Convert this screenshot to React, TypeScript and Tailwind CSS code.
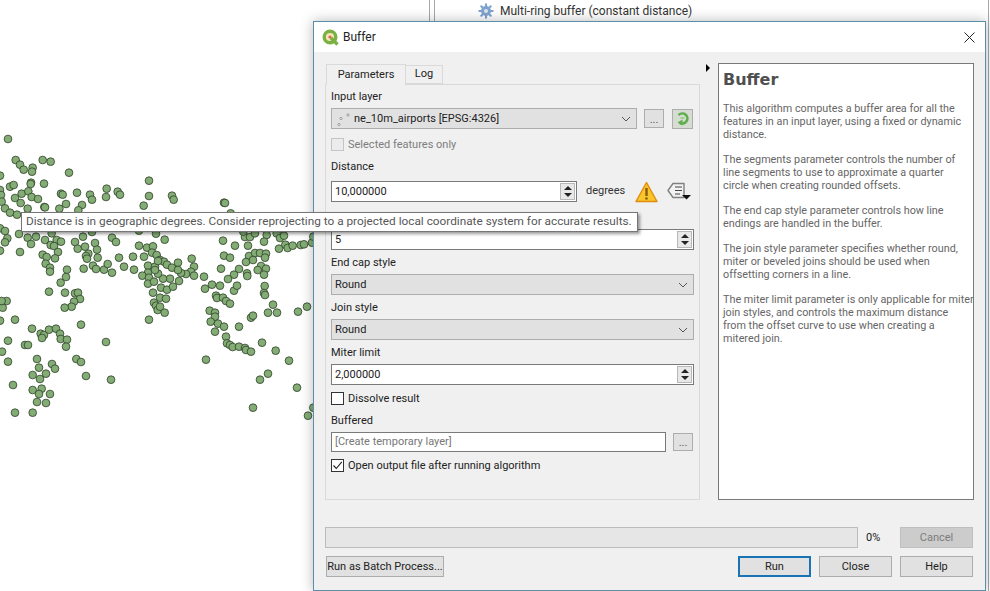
import React from 'react'

const DOTS: [number, number][] = [
  [24,57],[47,120],[60,134],[71,149],[98,143],[96,155],[128,120],[152,125],[207,158],[93,188],[92,192],[132,191],[30,200],[41,195],[0,167],[0,210],[3,225],[65,221],[85,214],[95,231],[114,237],[45,234],[62,249],[5,245],[15,265],[30,278],[51,284],[83,266],[133,261],[135,262],[178,266],[183,221],[188,224],[198,252],[231,218],[246,255],[235,271],[270,224],[276,239],[320,206],[318,231],[353,215],[360,224],[447,182],[447,228],[431,257],[516,227],[521,239],[672,248],[675,249],[692,280],
  [0,325],[15,333],[22,355],[15,367],[0,392],[60,396],[57,342],[83,353],[93,372],[108,350],[135,360],[155,340],[152,375],[170,360],[183,365],[162,378],[174,396],[165,415],[128,404],[140,411],[137,431],[150,443],[150,455],[201,449],[198,471],[182,488],[147,515],[195,518],[225,520],[234,518],[240,537],[222,545],[215,560],[194,563],[225,366],[233,386],[255,380],[249,350],[276,336],[285,369],[291,389],[265,401],[258,408],[261,416],[293,413],[251,446],[279,437],[288,447],[312,449],[323,432],[336,458],[336,353],[348,366],[357,413],[372,440],[399,410],[402,449],[417,377],[417,332],[468,341],[494,359],[441,383],[459,379],[456,398],[432,410],[470,405],[480,420],[492,425],[444,437],[465,440],[474,423],[501,434],[516,443],[534,428],[575,416],[582,440],[573,455],[558,462],[543,459],[582,467],[612,470],[534,450],[444,458],[427,467],[447,473],[444,491],[462,485],[459,518],[483,503],[501,509],[519,500],[537,483],[510,476],[489,476],[474,461],[465,450],[480,533],[498,536],[462,548],[468,557],[473,570],[494,578],[447,599],[480,560],
  [615,506],[636,494],[660,497],[648,527],[651,534],[669,533],[678,543],[690,551],[629,572],[645,578],[645,590],[632,605],[654,611],[672,620],[645,635],[717,620],[678,650],[681,670],[690,675],[698,681],[717,680],[735,684],[738,690],[753,695],[786,668],[827,692],[867,722],[618,719],[780,779],[804,761],[891,803],[759,863],[924,887],[940,863],[753,593],[759,587],[804,578],[831,578],[819,554],[894,575],[921,560],[794,498],[792,519],[795,525],[702,512],[711,497],[741,460],[742,468],[717,447],[702,464],[684,477],[663,446],[672,407],[690,413],[669,362],[705,377],[744,377],[735,351],[750,351],[765,340],[730,335],[800,345],[792,365],[830,340],[840,354],[852,347],[837,386],[856,374],[863,384],[878,377],[902,375],[912,373],[936,368],[940,350],[747,408],[765,399],[780,399],[798,401],[795,413],[738,426],[759,420],[783,438],[798,446],[773,450],[792,464],
  [8,563],[20,543],[5,543],[0,602],[45,599],[96,626],[122,641],[132,645],[126,654],[147,629],[168,626],[180,641],[182,657],[201,659],[198,680],[243,614],[24,662],[75,675],[84,675],[318,666],[6,695],[24,725],[111,717],[229,717],[243,726],[156,732],[165,746],[117,743],[138,761],[98,765],[120,777],[258,768],[333,779],[39,795],[98,810],[125,806],[117,822],[150,822],[111,846],[138,849],[45,878],[98,878],
]

const QgisLogo = () => (
  <svg width="17" height="17" viewBox="0 0 17 17">
    <circle cx="8" cy="8" r="5.8" fill="#f4e6b8" stroke="#7bb043" strokeWidth="3.4" />
    <path d="M9 9 L15.5 15.5" stroke="#7bb043" strokeWidth="3.4" />
    <circle cx="8" cy="8" r="1.6" fill="#d9694a" />
  </svg>
)

const Gear = () => (
  <svg width="16" height="16" viewBox="0 0 24 24">
    <g stroke="#7fa3cf" strokeWidth="3.2" strokeLinecap="round">
      <path d="M12 2v20M2 12h20M4.9 4.9l14.2 14.2M19.1 4.9L4.9 19.1" />
    </g>
    <circle cx="12" cy="12" r="7.5" fill="#7fa3cf" />
    <circle cx="12" cy="12" r="3" fill="#dbe6f3" />
  </svg>
)

const Chevron = () => (
  <svg width="10" height="6" viewBox="0 0 10 6" className="shrink-0">
    <path d="M1 1l4 4 4-4" fill="none" stroke="#555" strokeWidth="1" />
  </svg>
)

const Label: React.FC<{ children: React.ReactNode; className?: string }> = ({ children, className }) => (
  <div className={`h-4 pt-px leading-4 text-[#222] ${className ?? ''}`}>{children}</div>
)

const Spinner: React.FC<{ value: string; className?: string }> = ({ value, className }) => (
  <div className={`h-[21px] flex items-center justify-between bg-white border border-[#7a7a7a] pl-[3px] pr-px text-[#222] ${className ?? ''}`}>
    <span className="pt-[2px]">{value}</span>
    <div className="w-[15px] h-[17px] flex flex-col items-center justify-center gap-[3px] bg-[#e8e8e8] border border-[#b8b8b8]">
      <div className="w-0 h-0 border-x-[4px] border-x-transparent border-b-[4px] border-b-[#222]" />
      <div className="w-0 h-0 border-x-[4px] border-x-transparent border-t-[4px] border-t-[#222]" />
    </div>
  </div>
)

const Combo: React.FC<{ children: React.ReactNode; className?: string }> = ({ children, className }) => (
  <div className={`h-[21px] flex items-center justify-between bg-[#e1e1e1] border border-[#adadad] pl-[3px] pr-[5px] text-[#222] ${className ?? ''}`}>
    <div className="flex items-center pt-[2px]">{children}</div>
    <Chevron />
  </div>
)

const Check: React.FC<{ label: string; checked?: boolean; disabled?: boolean; className?: string }> = ({ label, checked, disabled, className }) => (
  <div className={`h-[15px] flex items-center gap-[4px] ${disabled ? 'text-[#7d7d7d]' : 'text-[#222]'} ${className ?? ''}`}>
    <div className={`w-[13px] h-[13px] flex items-center justify-center border ${disabled ? 'border-[#c4c4c4] bg-[#ececec]' : 'border-[#333] bg-white'}`}>
      {checked && (
        <svg width="11" height="11" viewBox="0 0 11 11">
          <path d="M1.5 5.5l2.8 3L9.8 1.8" fill="none" stroke="#222" strokeWidth="1.1" />
        </svg>
      )}
    </div>
    <span className="pt-[2px]">{label}</span>
  </div>
)

const DotsButton: React.FC<{ className?: string }> = ({ className }) => (
  <div className={`flex items-end justify-center pb-[1px] leading-3 bg-[#e1e1e1] border border-[#adadad] text-[#555] ${className ?? ''}`}>...</div>
)

const Btn: React.FC<{ children: React.ReactNode; primary?: boolean; className?: string }> = ({ children, primary, className }) => (
  <div className={`h-[21px] flex items-center justify-center pt-[2px] whitespace-nowrap bg-[#e1e1e1] text-[#222] ${primary ? 'border-2 border-[#1a73b4]' : 'border border-[#adadad]'} ${className ?? ''}`}>{children}</div>
)

const HELP = [
  ['This algorithm computes a buffer area for all the', 'features in an input layer, using a fixed or dynamic', 'distance.'],
  ['The segments parameter controls the number of', 'line segments to use to approximate a quarter', 'circle when creating rounded offsets.'],
  ['The end cap style parameter controls how line', 'endings are handled in the buffer.'],
  ['The join style parameter specifies whether round,', 'miter or beveled joins should be used when', 'offsetting corners in a line.'],
  ['The miter limit parameter is only applicable for miter', 'join styles, and controls the maximum distance', 'from the offset curve to use when creating a', 'mitered join.'],
]

export default function App() {
  return (
    <div className="relative w-[990px] h-[591px] overflow-hidden bg-white font-['Roboto',sans-serif] text-[11px]">
      {/* map canvas */}
      <svg className="absolute left-0 top-[120px]" width="330" height="310" viewBox="0 0 990 930">
        {DOTS.map(([x, y], i) => (
          <circle key={i} cx={x} cy={y} r="11.6" fill="#83ad75" stroke="#2f4029" strokeWidth="2.4" />
        ))}
      </svg>

      {/* processing toolbox behind the dialog */}
      <div className="absolute left-[434px] top-0 w-[555px] h-[591px] border-l border-r border-[#a8a8a8]">
        <div className="absolute left-[-6px] top-0 w-px h-full bg-[#a8a8a8]" />
        <div className="flex items-center gap-[6px] pl-[43px] pt-[2px] text-[12px] text-[#333]">
          <Gear />
          <span>Multi-ring buffer (constant distance)</span>
        </div>
      </div>

      {/* dialog */}
      <div className="absolute left-[313px] top-[21px] w-[673px] h-[570px] flex flex-col bg-[#f0f0f0] border border-[#5b8ea8] shadow-[0_0_12px_rgba(0,0,0,0.28)]">
        <div className="h-[30px] flex items-center justify-between bg-white pl-2 pr-[10px] shrink-0">
          <div className="flex items-center gap-[4px] text-[12px] text-[#222]">
            <QgisLogo />
            <span>Buffer</span>
          </div>
          <svg width="11" height="11" viewBox="0 0 11 11">
            <path d="M.5.5l10 10M10.5.5l-10 10" stroke="#222" strokeWidth="1" />
          </svg>
        </div>

        <div className="flex-1 flex flex-col pl-[11px] pr-[12px] pt-[11px]">
          <div className="flex h-[437px]">
            <div className="w-[375px] flex flex-col shrink-0">
              <div className="flex items-end h-[21px] pl-px">
                <div className="relative z-10 w-[80px] h-[21px] -mb-px flex items-center justify-center bg-[#f0f0f0] border border-b-0 border-[#d9d9d9] text-[#222]">Parameters</div>
                <div className="w-[37px] h-[19px] flex items-center justify-center bg-[#f0f0f0] border border-l-0 border-[#d9d9d9] text-[#222]">Log</div>
              </div>
              <div className="flex-1 flex flex-col border border-[#d9d9d9] px-[5px] pt-[3px]">
                <Label>Input layer</Label>
                <div className="mt-[4px] flex items-center h-[21px]">
                  <Combo className="w-[306px]">
                    <svg width="18" height="14" viewBox="0 0 18 14" className="shrink-0">
                      <circle cx="6" cy="5.5" r="1.1" fill="#fff" stroke="#777" strokeWidth=".7" />
                      <circle cx="13" cy="2" r="1.1" fill="#fff" stroke="#777" strokeWidth=".7" />
                      <circle cx="4" cy="11.5" r="1.1" fill="#fff" stroke="#777" strokeWidth=".7" />
                    </svg>
                    <span className="ml-px">ne_10m_airports [EPSG:4326]</span>
                  </Combo>
                  <DotsButton className="w-[20px] h-[19px] ml-[7px]" />
                  <div className="w-[21px] h-[20px] ml-[8px] flex items-center justify-center bg-[#d6dcd2] border border-[#adadad]">
                    <svg width="15" height="15" viewBox="0 0 15 15">
                      <path d="M3.6 4.2A5 5 0 1 1 4.8 11.8" fill="none" stroke="#5fae4e" strokeWidth="2.6" />
                      <path d="M7.5 8.5v6L2.5 11.5z" fill="#5fae4e" />
                      <path d="M5.5 7h4" stroke="#8ccb78" strokeWidth="1.5" />
                    </svg>
                  </div>
                </div>
                <Check label="Selected features only" disabled className="mt-[8px]" />
                <Label className="mt-[6px]">Distance</Label>
                <div className="mt-[7px] flex items-center h-[21px]">
                  <Spinner value="10,000000" className="w-[246px]" />
                  <span className="w-[38px] ml-[9px] text-[#333]">degrees</span>
                  <svg width="23" height="22" viewBox="0 0 23 22" className="ml-[11px]">
                    <path d="M11.5 1.5L22 20.5H1z" fill="#f8c62a" stroke="#e08a10" strokeWidth="1.4" strokeLinejoin="round" />
                    <path d="M11.5 7v8" stroke="#8a5a10" strokeWidth="2.4" />
                    <circle cx="11.5" cy="17.5" r="1.3" fill="#8a5a10" />
                  </svg>
                  <svg width="24" height="20" viewBox="0 0 24 20" className="ml-[9px]">
                    <path d="M6 1.5h11v14H6L1 8.5z" fill="#f2f2f2" stroke="#808080" strokeWidth="1.4" strokeLinejoin="round" />
                    <path d="M8 5h7M8 8.5h7M8 12h5" stroke="#444" strokeWidth="1.2" />
                    <path d="M15 13h9l-4.5 4.5z" fill="#111" />
                  </svg>
                </div>
                {/* this row's label sits behind the tooltip */}
                <div className="h-4 mt-[11px]" />
                <Spinner value="5" className="w-[363px]" />
                <Label className="mt-[4px]">End cap style</Label>
                <Combo className="w-[363px] mt-[4px]">Round</Combo>
                <Label className="mt-[4px]">Join style</Label>
                <Combo className="w-[363px] mt-[4px]">Round</Combo>
                <Label className="mt-[4px]">Miter limit</Label>
                <Spinner value="2,000000" className="w-[363px] mt-[4px]" />
                <Check label="Dissolve result" className="mt-[6px]" />
                <Label className="mt-[6px]">Buffered</Label>
                <div className="mt-[4px] flex items-center">
                  <div className="w-[335px] h-[20px] flex items-center pt-px bg-white border border-[#7a7a7a] pl-[3px] text-[#777]">[Create temporary layer]</div>
                  <DotsButton className="w-[20px] h-[18px] ml-[7px]" />
                </div>
                <Check label="Open output file after running algorithm" checked className="mt-[6px]" />
              </div>
            </div>

            <div className="w-[18px] shrink-0 pt-[1px] pl-[6px]">
              <div className="w-0 h-0 border-y-[4px] border-y-transparent border-l-[4px] border-l-black" />
            </div>

            <div className="w-[256px] shrink-0 bg-white border border-[#7a7a7a] pl-[4px] pt-[3px] text-[#666]">
              <div className="font-['DejaVu_Sans',sans-serif] font-bold text-[16px] leading-[26px] text-[#4f4f4f]">Buffer</div>
              <div className="mt-[9px] flex flex-col gap-[12px] leading-[13px] text-[10.8px]">
                {HELP.map((para, i) => (
                  <div key={i}>
                    {para.map((line) => (
                      <div key={line} className="whitespace-nowrap">{line}</div>
                    ))}
                  </div>
                ))}
              </div>
            </div>
          </div>

          <div className="mt-[27px] h-[21px] flex items-center">
            <div className="w-[533px] h-[21px] bg-[#e6e6e6] border border-[#bcbcbc]" />
            <span className="w-[42px] pl-[8px] pt-px text-[#222]">0%</span>
            <div className="w-[73px] h-[21px] flex items-center justify-center pt-[2px] bg-[#cccccc] border border-[#bfbfbf] text-[#7c7c7c]">Cancel</div>
          </div>
          <div className="mt-[8px] flex items-center">
            <Btn className="w-[118px] ml-px">Run as Batch Process...</Btn>
            <Btn primary className="w-[73px] ml-auto">Run</Btn>
            <Btn className="w-[73px] ml-[8px]">Close</Btn>
            <Btn className="w-[73px] ml-[8px]">Help</Btn>
          </div>
        </div>
      </div>

      {/* tooltip */}
      <div className="absolute left-[21px] top-[212px] h-[20px] w-[617px] flex items-center pl-[4px] whitespace-nowrap bg-white border border-[#767676] shadow-[2px_2px_3px_rgba(0,0,0,0.4)] text-[#575757] text-[11.8px]">
        Distance is in geographic degrees. Consider reprojecting to a projected local coordinate system for accurate results.
      </div>
    </div>
  )
}
